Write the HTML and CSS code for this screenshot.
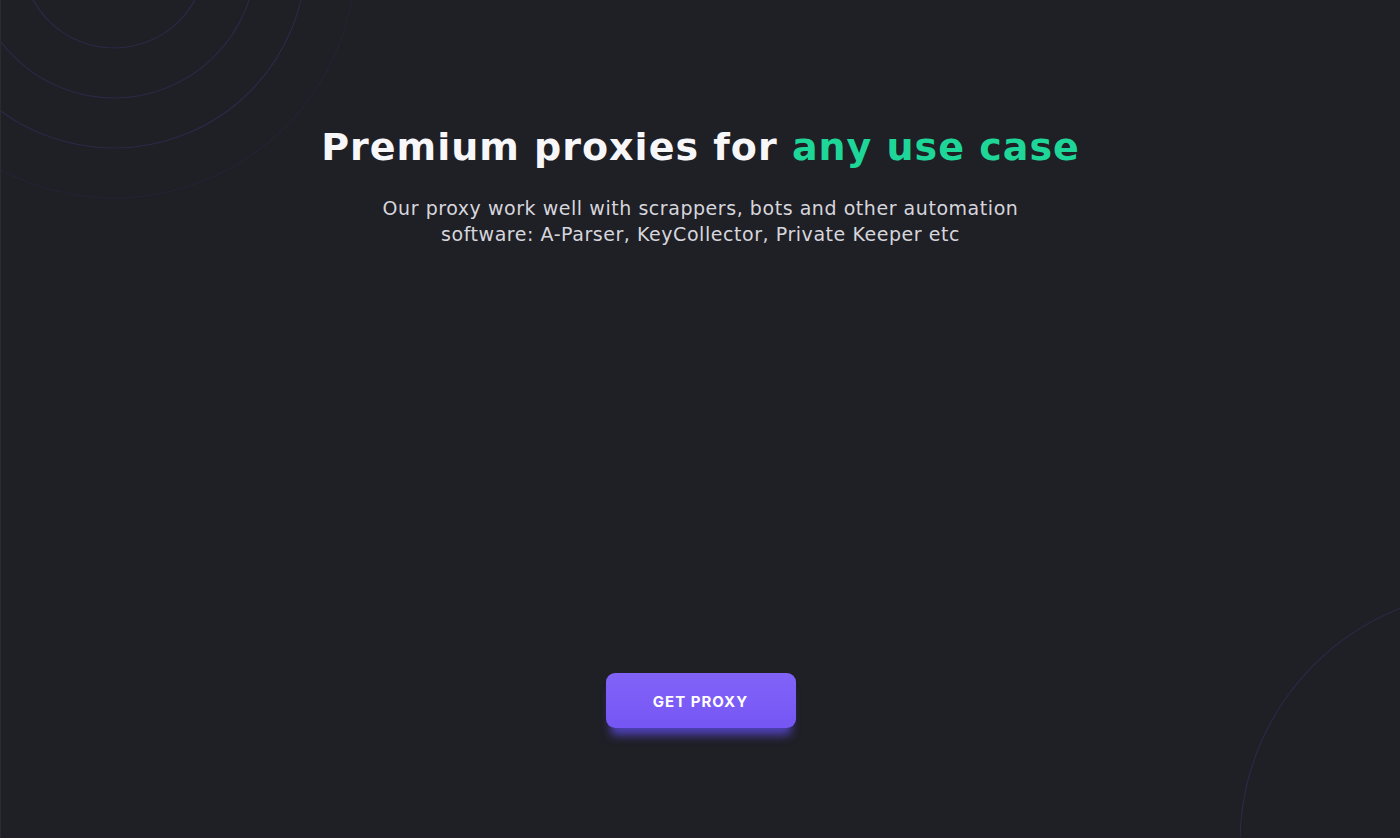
FILE: index.html
```html
<!DOCTYPE html>
<html>
	<head>
		<meta charset="UTF-8">
		<title>Premium proxies</title>
		<link rel="stylesheet" href="styles.css">
	</head>
	<body>
		<div class="hero">
			<svg class="rings" width="360" height="260" viewBox="0 0 360 260">
				<circle cx="113" cy="-44" r="92" />
				<circle cx="113" cy="-44" r="142" />
				<circle cx="113" cy="-44" r="192" />
				<circle class="faint" cx="113" cy="-44" r="242" />
			</svg>
			<svg class="arc" width="160" height="260" viewBox="0 0 160 260">
				<circle cx="252" cy="265" r="252" />
			</svg>
			<div class="content">
				<h1 class="title">Premium proxies for <span class="accent">any use case</span></h1>
				<p class="lead">Our proxy work well with scrappers, bots and other automation<br>software: A-Parser, KeyCollector, Private Keeper etc</p>
				<div class="stage"></div>
				<a class="btn" href="#">GET PROXY</a>
			</div>
		</div>
	</body>
</html>
```

FILE: styles.css
```css
*{
	margin: 0;
	padding: 0;
	box-sizing: border-box;
}
html,body{
	height: 100%;
}
body{
	background: #1f1f26;
	font-family: "Inter", "Open Sans", sans-serif;
	color: #fff;
	overflow: hidden;
}
.hero{
	position: relative;
	height: 838px;
	border-left: 1px solid #2a2a31;
}
.rings{
	position: absolute;
	left: 0;
	top: 0;
}
.rings circle,
.arc circle{
	fill: none;
	stroke: #2b2946;
	stroke-width: 1.2;
}
.rings .faint{
	stroke: #242333;
}
.arc{
	position: absolute;
	right: 0;
	bottom: 0;
}
.content{
	display: flex;
	flex-direction: column;
	align-items: center;
	padding-top: 122px;
	text-align: center;
}
.title{
	font-family: "DejaVu Sans", "Inter", sans-serif;
	font-size: 38px;
	font-weight: 700;
	line-height: 50px;
	letter-spacing: 1px;
	color: #f7f7fa;
}
.title .accent{
	color: #1fd699;
}
.lead{
	margin-top: 23px;
	font-family: "DejaVu Sans", "Inter", sans-serif;
	font-size: 19px;
	line-height: 26px;
	letter-spacing: 0.55px;
	color: #d6d6dc;
	font-weight: 400;
}
.stage{
	height: 426px;
}
.btn{
	display: flex;
	align-items: center;
	justify-content: center;
	width: 190px;
	height: 55px;
	border-radius: 9px;
	background: linear-gradient(180deg, #8163f8 0%, #7656f4 100%);
	box-shadow: 0 12px 10px -5px rgba(96, 78, 235, 0.75);
	color: #fff;
	font-size: 15px;
	font-weight: 700;
	letter-spacing: 1px;
	padding-top: 2px;
	text-decoration: none;
}
```
